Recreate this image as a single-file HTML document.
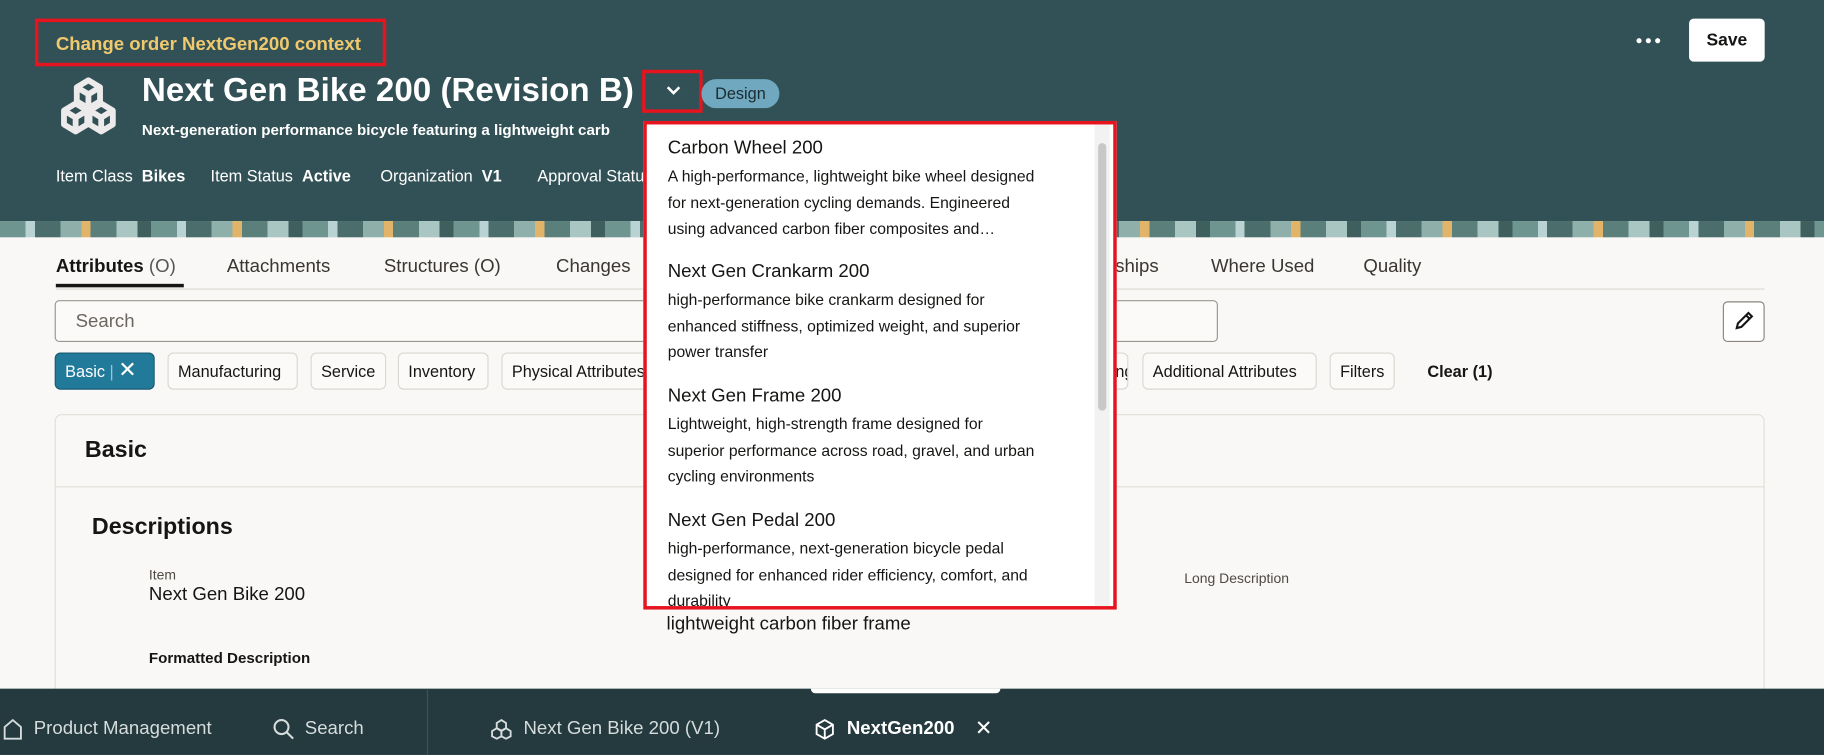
<!DOCTYPE html>
<html><head><meta charset="utf-8"><style>
*{box-sizing:border-box;margin:0;padding:0}
html,body{width:1824px;height:755px;overflow:hidden;background:#f9f8f6}
#w{position:absolute;left:0;top:0;width:1568px;height:649px;transform:scale(1.16327);transform-origin:0 0;font-family:"Liberation Sans",sans-serif;color:#161513}
.a{position:absolute;white-space:nowrap}
.hdr{position:absolute;left:0;top:0;width:1568px;height:190px;background:#325156}
.strip{position:absolute;left:0;top:190px;width:1568px;height:14px;background:repeating-linear-gradient(90deg,#6f9590 0 22px,#b9d3d4 22px 30px,#4b6e6c 30px 52px,#8fb0aa 52px 70px,#e2b46a 70px 78px,#5b807c 78px 100px,#a9c6c2 100px 118px,#3e5f5e 118px 130px)}
.tab{position:absolute;top:221px;font-size:16px;color:#3a3631;white-space:nowrap}
.chip{position:absolute;top:303px;height:32px;border:1px solid #dcd8d2;border-radius:5px;background:#fbfaf8;font-size:14px;line-height:30px;padding:0 8px;color:#161513;white-space:nowrap;overflow:hidden}
.dd .t{position:absolute;left:18px;font-size:16px;color:#161513}
.dd .d{position:absolute;left:18px;font-size:13.5px;line-height:22.5px;color:#161513;white-space:nowrap}
.bb{position:absolute;top:618px;font-size:16px;color:#d6dcdc;white-space:nowrap}
</style></head><body><div id="w">
<div class="hdr"></div>
<div class="strip"></div>
<div class="a" style="left:30px;top:16px;width:302px;height:41px;border:3px solid #e5141f"></div>
<div class="a" style="left:48px;top:30px;font-size:16px;font-weight:bold;color:#f0c96e">Change order NextGen200 context</div>
<svg class="a" style="left:50px;top:66px" width="52" height="50" viewBox="0 0 52 50"><g fill="none" stroke="#eceaea" stroke-width="5" stroke-linejoin="round"><path d="M26 3 L36 9 L36 21 L26 27 L16 21 L16 9Z M16 9 L26 15 L36 9 M26 15 L26 27"/><path d="M15 23 L25 29 L25 41 L15 47 L5 41 L5 29Z M5 29 L15 35 L25 29 M15 35 V47"/><path d="M37 23 L47 29 L47 41 L37 47 L27 41 L27 29Z M27 29 L37 35 L47 29 M37 35 V47"/></g></svg>
<div class="a" style="left:122px;top:62px;font-size:28.5px;font-weight:bold;color:#fff">Next Gen Bike 200 (Revision B)</div>
<div class="a" style="left:552px;top:60px;width:52px;height:37px;border:3px solid #e5141f"></div>
<svg class="a" style="left:571px;top:72px" width="16" height="12" viewBox="0 0 16 12"><path d="M3 3 L8 8 L13 3" fill="none" stroke="#fff" stroke-width="2.2"/></svg>
<div class="a" style="left:603px;top:68px;width:67px;height:25px;border-radius:13px;background:#6fa8bf;font-size:14px;line-height:25px;text-align:center;color:#1c2b30">Design</div>
<div class="a" style="left:122px;top:104px;font-size:13px;font-weight:bold;color:#fff">Next-generation performance bicycle featuring a lightweight carb</div>
<div class="a" style="left:48px;top:143px;font-size:14px;color:#fff">Item Class&nbsp; <b>Bikes</b></div>
<div class="a" style="left:181px;top:143px;font-size:14px;color:#fff">Item Status&nbsp; <b>Active</b></div>
<div class="a" style="left:327px;top:143px;font-size:14px;color:#fff">Organization&nbsp; <b>V1</b></div>
<div class="a" style="left:462px;top:143px;font-size:14px;color:#fff">Approval Status</div>
<svg class="a" style="left:1406px;top:31px" width="22" height="8" viewBox="0 0 22 8"><circle cx="3" cy="4" r="2.2" fill="#fff"/><circle cx="11" cy="4" r="2.2" fill="#fff"/><circle cx="19" cy="4" r="2.2" fill="#fff"/></svg>
<div class="a" style="left:1452px;top:16px;width:65px;height:37px;background:#fff;border-radius:4px;font-size:15px;font-weight:bold;line-height:37px;text-align:center">Save</div>

<div class="tab" style="left:48px;color:#161513;font-weight:bold">Attributes <span style="font-weight:normal;color:#555">(O)</span></div>
<div class="a" style="left:48px;top:244px;width:110px;height:3px;background:#161513"></div>
<div class="tab" style="left:195px">Attachments</div>
<div class="tab" style="left:330px">Structures <span>(O)</span></div>
<div class="tab" style="left:478px">Changes</div>
<div class="tab" style="left:900px">Relationships</div>
<div class="tab" style="left:1041px">Where Used</div>
<div class="tab" style="left:1172px">Quality</div>
<div class="a" style="left:48px;top:248px;width:1469px;height:1px;background:#dedad4"></div>
<div class="a" style="left:47px;top:258px;width:1000px;height:36px;border:1px solid #9a958f;border-radius:4px;background:#fbfaf8;font-size:16px;line-height:36px;padding-left:17px;color:#6b6660">Search</div>
<div class="a" style="left:1481px;top:259px;width:36px;height:35px;border:1px solid #8a857f;border-radius:4px;background:#fff"></div>
<svg class="a" style="left:1489px;top:266px" width="20" height="20" viewBox="0 0 20 20"><path d="M4 16 L5 12 L14 3 L17 6 L8 15 Z M12 5 L15 8" fill="none" stroke="#161513" stroke-width="1.8"/></svg>
<div class="chip" style="left:47px;width:86px;background:#227a9a;border-color:#1b5b72;color:#fff">Basic <span style="color:#9cc3d3">|</span> <span style="font-size:19px">✕</span></div>
<div class="chip" style="left:144px;width:112px">Manufacturing</div>
<div class="chip" style="left:267px;width:65px">Service</div>
<div class="chip" style="left:342px;width:78px">Inventory</div>
<div class="chip" style="left:431px;width:135px">Physical Attributes</div>
<div class="chip" style="left:900px;width:70px">Packaging</div>
<div class="chip" style="left:982px;width:150px">Additional Attributes</div>
<div class="chip" style="left:1143px;width:56px">Filters</div>
<div class="a" style="left:1227px;top:311px;font-size:14px;font-weight:bold">Clear (1)</div>

<div class="a" style="left:47px;top:356px;width:1470px;height:250px;border:1px solid #e2ded8;border-radius:6px;background:#f9f8f6"></div>
<div class="a" style="left:48px;top:418px;width:1468px;height:1px;background:#e2ded8"></div>
<div class="a" style="left:73px;top:376px;font-size:20px;font-weight:bold">Basic</div>
<div class="a" style="left:79px;top:442px;font-size:20px;font-weight:bold">Descriptions</div>
<div class="a" style="left:128px;top:487px;font-size:12px;color:#4f4a45">Item</div>
<div class="a" style="left:128px;top:503px;font-size:16px">Next Gen Bike 200</div>
<div class="a" style="left:1018px;top:490px;font-size:12px;color:#4f4a45">Long Description</div>
<div class="a" style="left:573px;top:528px;font-size:16px">lightweight carbon fiber frame</div>
<div class="a" style="left:128px;top:558px;font-size:13px;font-weight:bold">Formatted Description</div>

<div class="a dd" style="left:553px;top:104px;width:407px;height:420px;border:3px solid #e5141f;background:#fff;overflow:hidden">
<div class="t" style="top:12px">Carbon Wheel 200</div>
<div class="d" style="top:34px">A high-performance, lightweight bike wheel designed<br>for next-generation cycling demands. Engineered<br>using advanced carbon fiber composites and…</div>
<div class="t" style="top:118px">Next Gen Crankarm 200</div>
<div class="d" style="top:140px">high-performance bike crankarm designed for<br>enhanced stiffness, optimized weight, and superior<br>power transfer</div>
<div class="t" style="top:225px">Next Gen Frame 200</div>
<div class="d" style="top:247px">Lightweight, high-strength frame designed for<br>superior performance across road, gravel, and urban<br>cycling environments</div>
<div class="t" style="top:332px">Next Gen Pedal 200</div>
<div class="d" style="top:354px">high-performance, next-generation bicycle pedal<br>designed for enhanced rider efficiency, comfort, and<br>durability</div>
<div class="a" style="left:385px;top:0;width:13px;height:414px;background:#f2f2f2"></div>
<div class="a" style="left:388px;top:16px;width:7px;height:230px;border-radius:4px;background:#c8c8c8"></div>
</div>

<div class="a" style="left:0;top:592px;width:1568px;height:57px;background:#243a3f"></div>
<div class="a" style="left:367px;top:592px;width:1px;height:57px;background:#3b5257"></div>
<div class="a" style="left:697px;top:592px;width:163px;height:4px;background:#fff;border-radius:0 0 4px 4px"></div>
<svg class="a" style="left:2px;top:617px" width="18" height="20" viewBox="0 0 18 20"><path d="M2 18 V8 L9 2 L16 8 V18 Z" fill="none" stroke="#d6dcdc" stroke-width="1.6"/></svg>
<div class="bb" style="left:29px">Product Management</div>
<svg class="a" style="left:234px;top:617px" width="20" height="20" viewBox="0 0 20 20"><circle cx="8" cy="8" r="6" fill="none" stroke="#d6dcdc" stroke-width="1.8"/><path d="M12.5 12.5 L18 18" stroke="#d6dcdc" stroke-width="1.8"/></svg>
<div class="bb" style="left:262px">Search</div>
<svg class="a" style="left:422px;top:618px" width="18" height="18" viewBox="0 0 18 18"><g fill="none" stroke="#d6dcdc" stroke-width="1.6"><path d="M9 1 L13 3.5 V8 L9 10 L5 8 V3.5Z"/><path d="M5 8 L9 10.5 V15 L5 17 L1 15 V10.5Z"/><path d="M13 8 L17 10.5 V15 L13 17 L9 15 V10.5Z"/></g></svg>
<div class="bb" style="left:450px">Next Gen Bike 200 (V1)</div>
<svg class="a" style="left:700px;top:617px" width="18" height="20" viewBox="0 0 18 20"><path d="M9 2 L16 6 V14 L9 18 L2 14 V6 Z M2 6 L9 10 L16 6 M9 10 V18" fill="none" stroke="#fff" stroke-width="1.6"/></svg>
<div class="bb" style="left:728px;color:#fff;font-weight:bold">NextGen200</div>
<div class="bb" style="left:838px;color:#fff;font-size:18px;top:616px">✕</div>
</div></body></html>
